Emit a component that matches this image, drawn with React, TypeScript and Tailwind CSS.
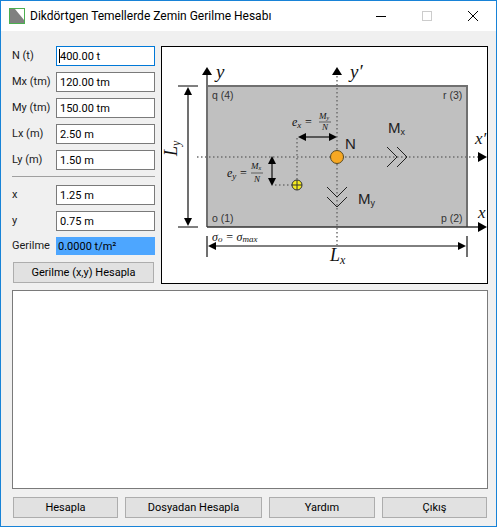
const uiFont = { fontFamily: 'Roboto, "Noto Sans", sans-serif' };
const mathFont = '"Liberation Serif", "DejaVu Serif", serif';
const sansFont = '"Liberation Sans", Arial, sans-serif';

function Field({ label, value, focused }: { label: string; value: string; focused?: boolean }) {
  return (
    <div className="flex items-center h-5">
      <span className="w-[44px] text-[11px] text-[#1a1a1a]">{label}</span>
      <div className="relative w-[99px] h-5">
        <input
          readOnly
          value={value}
          className={`block w-full h-full border bg-white px-[3px] text-[11px] text-black outline-none ${
            focused ? 'border-[#0078d7]' : 'border-[#7a7a7a]'
          }`}
        />
        {focused && <span className="absolute left-[3px] top-[3px] w-px h-[14px] bg-black" />}
      </div>
    </div>
  );
}

function Btn({ label, className }: { label: string; className: string }) {
  return (
    <button className={`h-[21px] bg-[#e1e1e1] border border-[#adadad] text-[11px] text-black leading-none ${className}`}>
      {label}
    </button>
  );
}

function Dots({ x1, y1, x2, y2 }: { x1: number; y1: number; x2: number; y2: number }) {
  return <line x1={x1} y1={y1} x2={x2} y2={y2} stroke="#6e6e6e" strokeWidth="1.5" strokeDasharray="1.5 2.5" />;
}

function Diagram() {
  return (
    <svg width="325" height="236" viewBox="162 47 325 236" className="block">
      {/* temel */}
      <rect x="207" y="86" width="260" height="141" fill="#c0c0c0" />
      <path d="M207 227V86H467V227" fill="none" stroke="#707070" strokeWidth="2" />

      {/* eksenler */}
      <line x1="207" y1="227" x2="207" y2="74" stroke="#707070" strokeWidth="2" />
      <polygon points="207,67 202,75 212,75" fill="#000" />
      <line x1="207" y1="227" x2="479" y2="227" stroke="#333" strokeWidth="1.5" />
      <polygon points="487,227 478,222 478,232" fill="#000" />
      <Dots x1={337} y1={76} x2={337} y2={245} />
      <polygon points="337,67 332,75 342,75" fill="#000" />
      <Dots x1={197} y1={157} x2={478} y2={157} />
      <polygon points="487,157 478,152 478,162" fill="#000" />

      {/* Ly olcusu */}
      <line x1="178" y1="86" x2="198" y2="86" stroke="#000" strokeWidth="1" />
      <line x1="178" y1="227" x2="198" y2="227" stroke="#000" strokeWidth="1" />
      <line x1="188" y1="94" x2="188" y2="219" stroke="#707070" strokeWidth="2" />
      <polygon points="188,87 184,95 192,95" fill="#000" />
      <polygon points="188,226 184,218 192,218" fill="#000" />

      {/* Lx olcusu */}
      <line x1="207" y1="236" x2="207" y2="257" stroke="#707070" strokeWidth="2" />
      <line x1="467" y1="236" x2="467" y2="257" stroke="#707070" strokeWidth="2" />
      <line x1="215" y1="246" x2="459" y2="246" stroke="#000" strokeWidth="1" />
      <polygon points="208,246 216,242 216,250" fill="#000" />
      <polygon points="466,246 458,242 458,250" fill="#000" />

      {/* ex, ey */}
      <Dots x1={297} y1={138} x2={297} y2={180} />
      <Dots x1={275} y1={185} x2={292} y2={185} />
      <line x1="305" y1="137" x2="330" y2="137" stroke="#333" strokeWidth="1.5" />
      <polygon points="298,137 306,133 306,141" fill="#000" />
      <polygon points="337,137 329,133 329,141" fill="#000" />
      <line x1="272" y1="163" x2="272" y2="180" stroke="#555" strokeWidth="2" />
      <polygon points="272,156 268,164 276,164" fill="#000" />
      <polygon points="272,186 268,178 276,178" fill="#000" />

      {/* momentler */}
      <path d="M387 147L397 157L387 167M397 147L407 157L397 167" fill="none" stroke="#222" strokeWidth="1" />
      <path d="M327 187L337 197L347 187M327 197L337 207L347 197" fill="none" stroke="#222" strokeWidth="1" />

      {/* noktalar */}
      <circle cx="337" cy="157" r="6.5" fill="#f7a823" stroke="#5a4a20" strokeWidth="1" />
      <circle cx="297" cy="185" r="5" fill="#f5ea1e" stroke="#333" strokeWidth="1" />
      <path d="M292 185H302M297 180V190" stroke="#333" strokeWidth="1" />

      {/* yazilar */}
      <g fontFamily={sansFont} fontSize="10.5" fill="#333">
        <text x="212" y="99">q (4)</text>
        <text x="443" y="99">r (3)</text>
        <text x="212" y="222">o (1)</text>
        <text x="441" y="222">p (2)</text>
      </g>
      <g fontFamily={sansFont} fill="#222">
        <text x="345" y="149" fontSize="15">N</text>
        <text x="388" y="133" fontSize="15">M<tspan fontSize="9" dy="2">x</tspan></text>
        <text x="358" y="204" fontSize="15">M<tspan fontSize="9" dy="2">y</tspan></text>
      </g>
      <g fontFamily={mathFont} fontStyle="italic" fill="#111">
        <text x="216" y="78" fontSize="19">y</text>
        <text x="350" y="78" fontSize="19">y′</text>
        <text x="475" y="144" fontSize="17">x′</text>
        <text x="478" y="218" fontSize="17">x</text>
        <text x="330" y="261" fontSize="18">L<tspan fontSize="12" dy="3">x</tspan></text>
        <text transform="translate(177 156) rotate(-90)" fontSize="18">L<tspan fontSize="12" dy="3">y</tspan></text>
        <text x="212" y="241" fontSize="12">σ<tspan fontSize="9" dy="1">o</tspan><tspan dy="-1"> = σ</tspan><tspan fontSize="9" dy="1">max</tspan></text>
        <text x="292" y="126" fontSize="12">e<tspan fontSize="9" dy="2">x</tspan><tspan dy="-2"> =</tspan></text>
        <text x="319" y="119" fontSize="9">M<tspan fontSize="6" dy="1">y</tspan></text>
        <text x="322" y="130" fontSize="9">N</text>
        <text x="227" y="177" fontSize="12">e<tspan fontSize="9" dy="2">y</tspan><tspan dy="-2"> =</tspan></text>
        <text x="251" y="169" fontSize="9">M<tspan fontSize="6" dy="1">x</tspan></text>
        <text x="254" y="182" fontSize="9">N</text>
      </g>
      <line x1="319" y1="122" x2="331" y2="122" stroke="#333" strokeWidth="0.7" />
      <line x1="251" y1="173" x2="263" y2="173" stroke="#333" strokeWidth="0.7" />
    </svg>
  );
}

export default function App() {
  return (
    <div className="w-[497px] h-[527px] border border-[#1883d7] bg-[#f0f0f0] flex flex-col overflow-hidden" style={uiFont}>
      {/* Title bar */}
      <div className="h-[30px] bg-white flex items-center shrink-0">
        <svg width="16" height="16" viewBox="0 0 16 16" className="ml-2 shrink-0">
          <rect x="0.5" y="0.5" width="15" height="15" fill="#808080" stroke="#4caf50" />
          <polygon points="6,1 15,1 15,12" fill="#fff" />
        </svg>
        <span className="ml-[5px] text-[12px] text-black flex-1">Dikdörtgen Temellerde Zemin Gerilme Hesabı</span>
        <div className="flex items-center">
          <div className="w-[46px] flex justify-center">
            <svg width="10" height="10" viewBox="0 0 10 10"><path d="M0 5.5H10" stroke="#000" /></svg>
          </div>
          <div className="w-[46px] flex justify-center">
            <svg width="10" height="10" viewBox="0 0 10 10"><rect x="0.5" y="0.5" width="9" height="9" fill="none" stroke="#ccc" /></svg>
          </div>
          <div className="w-[46px] flex justify-center">
            <svg width="10" height="10" viewBox="0 0 10 10"><path d="M0 0L10 10M10 0L0 10" stroke="#000" /></svg>
          </div>
        </div>
      </div>

      {/* Body */}
      <div className="flex-1 flex flex-col pl-[11px] pr-2 pt-[15px]">
        <div className="flex gap-[6px]">
          <div className="w-[143px] flex flex-col">
            <div className="flex flex-col gap-[6px]">
              <Field label="N (t)" value="400.00 t" focused />
              <Field label="Mx (tm)" value="120.00 tm" />
              <Field label="My (tm)" value="150.00 tm" />
              <Field label="Lx (m)" value="2.50 m" />
              <Field label="Ly (m)" value="1.50 m" />
            </div>
            <div className="h-px bg-[#a0a0a0] mt-[6px] mb-2" />
            <div className="flex flex-col gap-[6px]">
              <Field label="x" value="1.25 m" />
              <Field label="y" value="0.75 m" />
              <div className="flex items-center h-[18px]">
                <span className="w-[44px] text-[11px] text-[#1a1a1a]">Gerilme</span>
                <input readOnly value="0.0000 t/m²" className="block w-[99px] h-[18px] bg-[#4da6ff] px-[2px] text-[11px] text-black outline-none" />
              </div>
            </div>
            <Btn label="Gerilme (x,y) Hesapla" className="mt-[7px] ml-px w-[141px]" />
          </div>
          <div className="w-[327px] h-[238px] border border-black bg-white">
            <Diagram />
          </div>
        </div>

        <textarea readOnly className="mt-[6px] w-[476px] h-[199px] bg-white border border-[#7a7a7a] outline-none resize-none" />

        <div className="mt-2 ml-px flex gap-[7px]">
          <Btn label="Hesapla" className="w-[105px]" />
          <Btn label="Dosyadan Hesapla" className="w-[137px]" />
          <Btn label="Yardım" className="w-[106px]" />
          <Btn label="Çıkış" className="w-[105px]" />
        </div>
      </div>
    </div>
  );
}
